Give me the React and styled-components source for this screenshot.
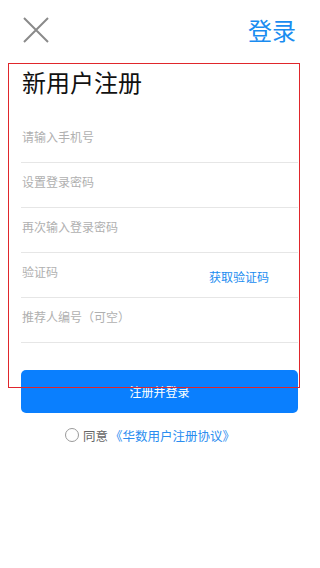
import React from "react";
import styled, { createGlobalStyle } from "styled-components";

const Global = createGlobalStyle`
  html, body { margin: 0; padding: 0; background: #fff; }
  body { font-family: "Noto Sans CJK SC", "Noto Sans", sans-serif; }
  * { box-sizing: border-box; }
`;

const Page = styled.div`
  position: relative;
  width: 320px;
  height: 568px;
  background: #fff;
  overflow: hidden;
`;

const Header = styled.div`
  display: flex;
  align-items: center;
  justify-content: space-between;
  height: 58px;
  padding: 2px 24px 0 22px;
`;

const CloseBtn = styled.button`
  width: 28px;
  height: 28px;
  padding: 0;
  border: 0;
  background: none;
  display: flex;
  align-items: center;
  justify-content: center;
`;

const LoginLink = styled.span`
  font-size: 24px;
  line-height: 30px;
  color: #1a8cf0;
`;

const Title = styled.h1`
  margin: 8px 0 0 22px;
  font-size: 24px;
  line-height: 32px;
  font-weight: 400;
  color: #111;
`;

const Form = styled.div`
  margin-top: 20px;
  padding: 0 22px 0 21px;
`;

const Row = styled.div`
  display: flex;
  align-items: center;
  height: 45px;
  border-bottom: 1px solid #e6e6e6;
`;

const Input = styled.input`
  flex: 1;
  min-width: 0;
  align-self: flex-start;
  height: 36px;
  padding: 0 0 0 1px;
  border: 0;
  outline: none;
  background: transparent;
  font-family: inherit;
  font-size: 12px;
  color: #333;
  &::placeholder { color: #b0b0b0; }
`;

const CodeBtn = styled.span`
  margin-right: 29px;
  font-size: 12px;
  color: #1a8cf0;
  padding-top: 2px;
`;

const Submit = styled.button`
  display: block;
  width: 277px;
  height: 43px;
  margin: 27px 0 0 21px;
  border: 0;
  border-radius: 5px;
  background: #0a7ffe;
  color: #fff;
  font-family: inherit;
  font-size: 12px;
`;

const Agree = styled.div`
  display: flex;
  align-items: center;
  justify-content: center;
  margin-top: 12px;
  padding-right: 20px;
  height: 20px;
  font-size: 12.5px;
  color: #666;
`;

const Radio = styled.span`
  width: 14px;
  height: 14px;
  border: 1px solid #9a9a9a;
  border-radius: 50%;
  margin-right: 4px;
`;

const Protocol = styled.span`
  color: #2a8df0;
  margin-left: 2px;
`;

const DebugFrame = styled.div`
  position: absolute;
  left: 8px;
  top: 63px;
  width: 292px;
  height: 325px;
  border: 1px solid #e0262b;
  pointer-events: none;
`;

const fields = [
  "请输入手机号",
  "设置登录密码",
  "再次输入登录密码",
  "验证码",
  "推荐人编号（可空）",
];

export default function App() {
  return (
    <Page>
      <Global />
      <Header>
        <CloseBtn aria-label="关闭">
          <svg width="26" height="26" viewBox="0 0 26 26">
            <path d="M1 1 L25 25 M25 1 L1 25" stroke="#8a8a8a" strokeWidth="2" fill="none" />
          </svg>
        </CloseBtn>
        <LoginLink>登录</LoginLink>
      </Header>
      <Title>新用户注册</Title>
      <Form>
        {fields.map((f) => (
          <Row key={f}>
            <Input placeholder={f} />
            {f === "验证码" && <CodeBtn>获取验证码</CodeBtn>}
          </Row>
        ))}
      </Form>
      <Submit>注册并登录</Submit>
      <Agree>
        <Radio />
        同意
        <Protocol>《华数用户注册协议》</Protocol>
      </Agree>
      <DebugFrame />
    </Page>
  );
}
